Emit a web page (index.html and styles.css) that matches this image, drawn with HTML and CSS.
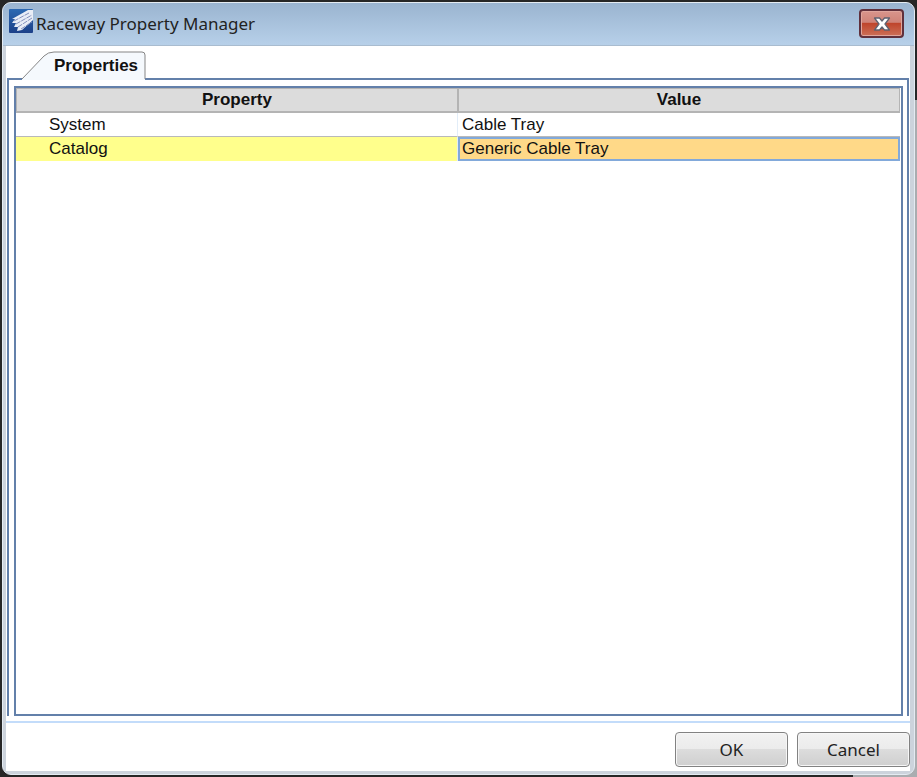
FILE: index.html
```
<!DOCTYPE html>
<html lang="en">
<head>
  <meta charset="UTF-8" />
  <meta name="viewport" content="width=device-width, initial-scale=1.0"/>
  <title>Raceway Property Manager</title>
  <link rel="stylesheet" href="styles.css">
</head>
<body>
  <div class="window">
    <header class="titlebar">
      <svg class="app-icon" width="24" height="24" viewBox="0 0 24 24" aria-hidden="true">
        <defs>
          <linearGradient id="iconBg" x1="0" y1="0" x2="0" y2="1">
            <stop offset="0" stop-color="#2c69b2"/>
            <stop offset="1" stop-color="#1c4088"/>
          </linearGradient>
        </defs>
        <rect width="24" height="24" rx="1" fill="url(#iconBg)"/>
        <path d="M3 10 L19 1 L24 1 L24 11 L13 21 L8 22 L9 18 L5 18 L7 14 L3 14 L6 10 Z" fill="#e9edf6"/>
        <path d="M5 12 L20 4 M7 15 L23 6 M9 18 L23 9 M12 20 L23 13" stroke="#8591bd" stroke-width="1" stroke-dasharray="5 1" fill="none"/>
      </svg>
      <h1>Raceway Property Manager</h1>
      <button class="close" type="button" aria-label="Close">
        <svg width="18" height="16" viewBox="0 0 18 16" aria-hidden="true">
          <path d="M1.500 2 H6.500 L9 5 L11.500 2 H16.500 L12 8 L16.500 14 H11.500 L9 11 L6.500 14 H1.500 L6 8 Z" fill="#fff" stroke="#5f6270" stroke-width="1.300" stroke-linejoin="round"/>
        </svg>
      </button>
    </header>

    <main class="content">
      <div class="tabs">
        <button class="tab" type="button">
          <svg class="tab-shape" width="124" height="29" viewBox="0 0 124 29" aria-hidden="true">
            <path d="M0 28 L22 5 Q26 1 32 1 H120 Q123 1 123 4 V29 H0 Z" fill="#f5f9fd"/>
            <path d="M0 28 L22 5 Q26 1 32 1 H120 Q123 1 123 4 V28" fill="none" stroke="#858585"/>
          </svg>
          <span>Properties</span>
        </button>
      </div>
      <div class="panel">
        <div class="grid">
          <table>
            <thead>
              <tr><th>Property</th><th>Value</th></tr>
            </thead>
            <tbody>
              <tr><td>System</td><td>Cable Tray</td></tr>
              <tr class="selected"><td>Catalog</td><td>Generic Cable Tray</td></tr>
            </tbody>
          </table>
        </div>
      </div>
    </main>

    <footer class="actions">
      <button type="button">OK</button>
      <button type="button">Cancel</button>
    </footer>
  </div>
</body>
</html>
```
FILE: styles.css
```
* {
  box-sizing: border-box;
}

body {
  margin: 0;
  padding: 2px;
  height: 100vh;
  background: linear-gradient(to right, #262626 93%, transparent 93%),
    linear-gradient(#262626 100px, #a9adb0 100px);
  font-family: "Liberation Sans", Arial, sans-serif;
  font-size: 17px;
  color: #111;
}

.window {
  display: flex;
  flex-direction: column;
  height: 100%;
  padding: 0 4px 3px 3px;
  border: 1px solid #e4ebf2;
  border-radius: 9px;
  background: #ccd3dc;
  overflow: hidden;
}

.titlebar {
  display: flex;
  align-items: flex-start;
  height: 43px;
  margin: 0 -4px 0 -3px;
  padding: 6px 10px 0 6px;
  background: linear-gradient(#9ab4d0, #b7d0e9);
  border-bottom: 1px solid #a9bccf;
}

h1 {
  flex: 1;
  margin: 0 0 0 3px;
  font-family: "Noto Sans", "Open Sans", sans-serif;
  font-size: 17px;
  font-weight: normal;
  line-height: 30px;
  color: #222;
}

.close {
  display: flex;
  align-items: center;
  justify-content: center;
  width: 45px;
  height: 29px;
  padding: 0;
  border: 2px solid #60303c;
  border-radius: 4px;
  background: linear-gradient(#d9958c, #cf8378 45%, #bf452c 50%, #cc7058);
  box-shadow: inset 0 0 0 1px #dfa59c;
}

.content {
  display: flex;
  flex: 1;
  flex-direction: column;
  padding: 5px 1px;
  background: #fff;
}

.tabs {
  display: flex;
  height: 27px;
  padding-left: 15px;
}

.tab {
  position: relative;
  width: 124px;
  height: 29px;
  padding: 0 0 0 24px;
  border: 0;
  background: none;
  font: bold 17px "Liberation Sans", Arial, sans-serif;
  color: #111;
}

.tab-shape {
  position: absolute;
  top: 0;
  left: 0;
}

.tab span {
  position: relative;
}

.panel {
  display: flex;
  flex: 1;
  padding: 6px 4px 0 5px;
  border: 2px solid #6380aa;
  border-bottom: 0;
}

.grid {
  flex: 1;
  padding-right: 1px;
  border: 2px solid #6380aa;
}

table {
  width: 100%;
  table-layout: fixed;
  border-collapse: separate;
  border-spacing: 0;
}

th,
td {
  height: 24px;
  padding: 0 4px;
  line-height: 20px;
}

th {
  height: 25px;
  border: 1px solid #b4b4b4;
  border-bottom-width: 2px;
  background: #dcdcdc;
}

td {
  border-bottom: 1px solid #b9b9b9;
}

td:first-child {
  padding-left: 33px;
  border-right: 1px solid #e2edf8;
}

.selected td {
  border-bottom: 0;
  background: #ffff8c;
}

.selected td:last-child {
  padding: 0 2px;
  border: 2px solid #82a9da;
  background: #ffd988;
}

.actions {
  display: flex;
  justify-content: flex-end;
  gap: 9px;
  padding: 9px 0 4px;
  border-top: 2px solid #c3dcfa;
  background: #fff;
}

.actions button {
  width: 113px;
  height: 35px;
  border: 1px solid #828282;
  border-radius: 4px;
  background: linear-gradient(#f2f2f2, #ebebeb 50%, #dcdcdc 50%, #cfcfcf);
  box-shadow: inset 0 0 0 1px #f6f6f6;
  font: 17px "Noto Sans", "Open Sans", sans-serif;
  color: #222;
}
```
